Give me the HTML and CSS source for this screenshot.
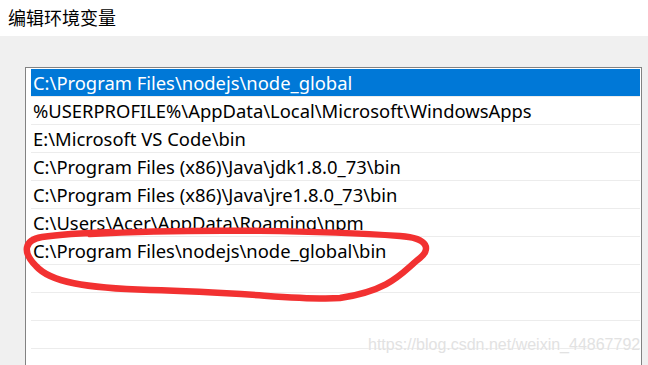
FILE: index.html
```html
<!DOCTYPE html>
<html lang="zh-CN">
<head>
  <meta charset="UTF-8" />
  <title>编辑环境变量</title>
  <link rel="stylesheet" href="styles.css">
</head>
<body>
  <div class="titlebar">编辑环境变量</div>

  <div class="content">
    <div class="pathlist">
      <div class="row selected">C:\Program Files\nodejs\node_global</div>
      <div class="row">%USERPROFILE%\AppData\Local\Microsoft\WindowsApps</div>
      <div class="row">E:\Microsoft VS Code\bin</div>
      <div class="row">C:\Program Files (x86)\Java\jdk1.8.0_73\bin</div>
      <div class="row">C:\Program Files (x86)\Java\jre1.8.0_73\bin</div>
      <div class="row">C:\Users\Acer\AppData\Roaming\npm</div>
      <div class="row">C:\Program Files\nodejs\node_global\bin</div>
      <div class="row"></div>
      <div class="row"></div>
      <div class="row"></div>
      <div class="row"></div>
    </div>
  </div>

  <!-- hand drawn mark around the new entry -->
  <svg class="scribble" width="648" height="365" viewBox="0 0 648 365">
    <path d="M 90 234 C 200 228, 330 231, 400 236 C 430 238, 430 250, 420 258 C 402 272, 392 290, 340 298 C 300 301, 250 292, 150 290 C 85 288, 50 282, 36 266 C 22 252, 24 240, 42 237 C 62 234, 82 233, 112 232"
          fill="none" stroke="#f23131" stroke-width="6.5" stroke-linecap="round" stroke-linejoin="round" />
  </svg>

  <div class="watermark">https://blog.csdn.net/weixin_44867792</div>
</body>
</html>
```

FILE: styles.css
```css
html, body {
  margin: 0;
  padding: 0;
}

body {
  width: 648px;
  height: 365px;
  overflow: hidden;
  background: #f0f0f0;
  position: relative;
  font-family: "Noto Sans", "Noto Sans CJK SC", sans-serif;
}

.titlebar {
  height: 36px;
  background: #ffffff;
  padding-left: 8px;
  line-height: 34px;
  font-size: 18px;
  color: #000;
  font-family: "Noto Sans CJK SC", sans-serif;
  box-sizing: border-box;
}

.content {
  padding: 31px 0 0 25px;
}

.pathlist {
  width: 617px;
  box-sizing: border-box;
  border: 1px solid #828282;
  border-bottom: none;
  background: #ffffff;
  padding: 1px 1px 0 5px;
}

.row {
  height: 27px;
  line-height: 27px;
  border-bottom: 1px solid #ececec;
  padding-left: 2px;
  font-size: 18.4px;
  color: #000;
  white-space: nowrap;
}

.row.selected {
  background: #0078d7;
  color: #ffffff;
}

.scribble {
  position: absolute;
  left: 0;
  top: 0;
  pointer-events: none;
}

.watermark {
  position: absolute;
  left: 368px;
  top: 336px;
  font-family: "Liberation Sans", sans-serif;
  font-size: 16px;
  color: #e2e2e2;
  text-shadow: 0 0 2px #fff;
}
```
